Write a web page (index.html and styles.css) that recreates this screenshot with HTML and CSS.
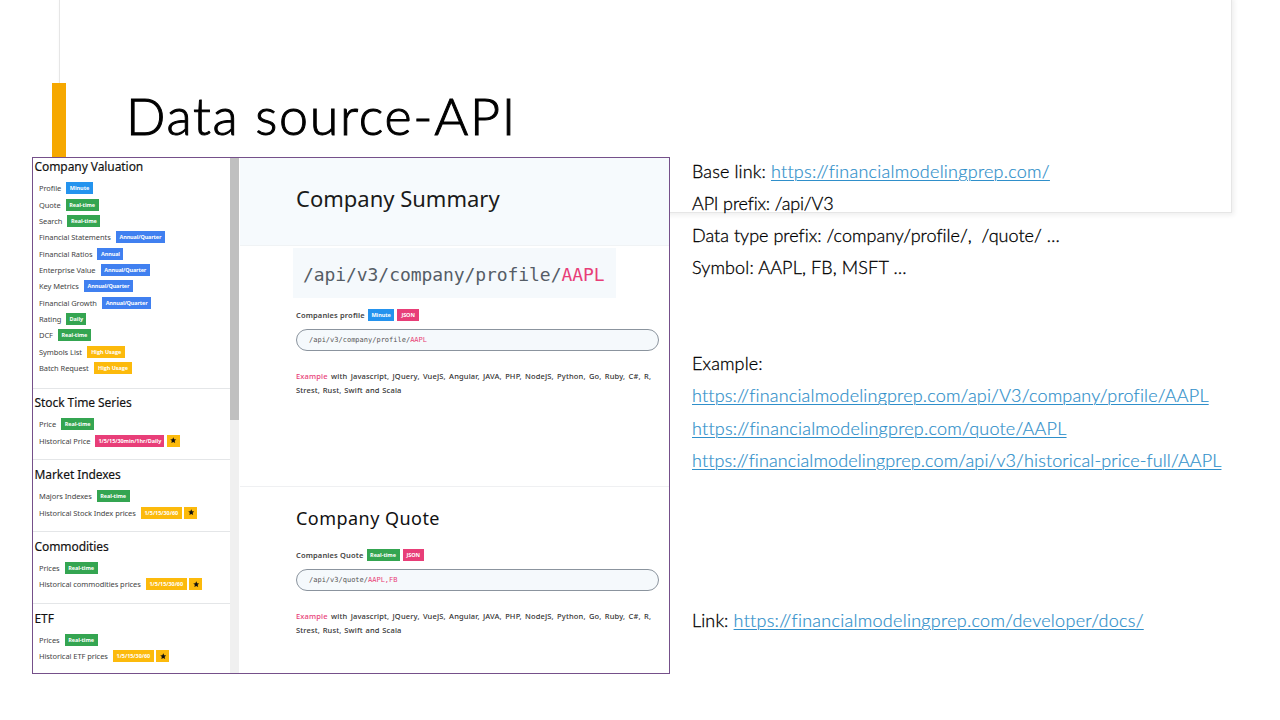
FILE: index.html
```html
<!DOCTYPE html>
<html lang="en">
<head>
<meta charset="utf-8">
<title>Data source-API</title>
<link rel="stylesheet" href="styles.css">
</head>
<body>
<div class="slide">
  <div class="frame"></div>
  <header class="head">
    <span class="accent"></span>
    <h1 class="title">Data source-API</h1>
  </header>
  <main class="content">
    <section class="shot">
      <nav class="side">
        <div class="group first">
          <h2>Company Valuation</h2>
          <div class="item">Profile <b class="tag sky">Minute</b></div>
          <div class="item">Quote <b class="tag green">Real-time</b></div>
          <div class="item">Search <b class="tag green">Real-time</b></div>
          <div class="item">Financial Statements <b class="tag blue">Annual/Quarter</b></div>
          <div class="item">Financial Ratios <b class="tag blue year">Annual</b></div>
          <div class="item">Enterprise Value <b class="tag blue">Annual/Quarter</b></div>
          <div class="item">Key Metrics <b class="tag blue">Annual/Quarter</b></div>
          <div class="item">Financial Growth <b class="tag blue">Annual/Quarter</b></div>
          <div class="item">Rating <b class="tag green day">Daily</b></div>
          <div class="item">DCF <b class="tag green">Real-time</b></div>
          <div class="item">Symbols List <b class="tag amber usage">High Usage</b></div>
          <div class="item">Batch Request <b class="tag amber usage">High Usage</b></div>
        </div>
        <div class="group">
          <h2>Stock Time Series</h2>
          <div class="item">Price <b class="tag green">Real-time</b></div>
          <div class="item">Historical Price <b class="tag pink long">1/5/15/30min/1hr/Daily</b><b class="tag amber star"><svg viewBox="0 0 24 24"><path d="M12 1l3.2 7.4 8 .7-6.100 5.200 1.900 7.900L12 18l-7 4.200 1.900-7.900L.8 9.100l8-.7z"/></svg></b></div>
        </div>
        <div class="group">
          <h2>Market Indexes</h2>
          <div class="item">Majors Indexes <b class="tag green">Real-time</b></div>
          <div class="item">Historical Stock Index prices <b class="tag amber mins">1/5/15/30/60</b><b class="tag amber star"><svg viewBox="0 0 24 24"><path d="M12 1l3.2 7.4 8 .7-6.100 5.200 1.900 7.900L12 18l-7 4.200 1.900-7.900L.8 9.100l8-.7z"/></svg></b></div>
        </div>
        <div class="group">
          <h2>Commodities</h2>
          <div class="item">Prices <b class="tag green">Real-time</b></div>
          <div class="item">Historical commodities prices <b class="tag amber mins">1/5/15/30/60</b><b class="tag amber star"><svg viewBox="0 0 24 24"><path d="M12 1l3.2 7.4 8 .7-6.100 5.200 1.900 7.900L12 18l-7 4.200 1.900-7.900L.8 9.100l8-.7z"/></svg></b></div>
        </div>
        <div class="group">
          <h2>ETF</h2>
          <div class="item">Prices <b class="tag green">Real-time</b></div>
          <div class="item">Historical ETF prices <b class="tag amber mins">1/5/15/30/60</b><b class="tag amber star"><svg viewBox="0 0 24 24"><path d="M12 1l3.2 7.4 8 .7-6.100 5.200 1.900 7.900L12 18l-7 4.200 1.900-7.900L.8 9.100l8-.7z"/></svg></b></div>
        </div>
      </nav>
      <div class="scroll"><div class="thumb"></div></div>
      <div class="docs">
        <h2 class="summary">Company Summary</h2>
        <div class="entry profile">
          <div class="big">/api/v3/company/profile/<i>AAPL</i></div>
          <div class="label">Companies profile <b class="tag sky">Minute</b><b class="tag pink json">JSON</b></div>
          <div class="pill">/api/v3/company/profile/<i>AAPL</i></div>
          <p class="langs"><i>Example</i> with Javascript, JQuery, VueJS, Angular, JAVA, PHP, NodeJS, Python, Go, Ruby, C#, R,<br><span class="rest">Strest, Rust, Swift and Scala</span></p>
        </div>
        <div class="entry">
          <h3>Company Quote</h3>
          <div class="label">Companies Quote <b class="tag green">Real-time</b><b class="tag pink json">JSON</b></div>
          <div class="pill">/api/v3/quote/<i>AAPL,FB</i></div>
          <p class="langs"><i>Example</i> with Javascript, JQuery, VueJS, Angular, JAVA, PHP, NodeJS, Python, Go, Ruby, C#, R,<br><span class="rest">Strest, Rust, Swift and Scala</span></p>
        </div>
      </div>
    </section>
    <section class="notes">
      <p>Base link: <a class="base">https://financialmodelingprep.com/</a></p>
      <p class="prefix">API prefix: /api/V3</p>
      <p class="types">Data type prefix: /company/profile/,&nbsp; /quote/ …</p>
      <p>Symbol: AAPL, FB, MSFT …</p>
      <p class="gap2">Example:</p>
      <p><a class="l1">https://financialmodelingprep.com/api/V3/company/profile/AAPL</a></p>
      <p><a class="l2">https://financialmodelingprep.com/quote/AAPL</a></p>
      <p><a class="l3">https://financialmodelingprep.com/api/v3/historical-price-full/AAPL</a></p>
      <p class="gap4">Link: <a class="l4">https://financialmodelingprep.com/developer/docs/</a></p>
    </section>
  </main>
</div>
</body>
</html>
```
FILE: styles.css
```css
* { box-sizing: border-box; }
body { margin: 0; background: #fff; }
h1, h2, h3, p { margin: 0; font-weight: 400; }
i { font-style: normal; color: #e83e78; }

.slide { position: relative; width: 1280px; height: 720px; overflow: hidden; background: #fff; }
.frame {
  position: absolute; left: 59px; top: -4px; width: 1173px; height: 217px;
  border: 1px solid #e6e6e6; box-shadow: 2px 2px 5px rgba(0, 0, 0, .07);
}
.head { position: relative; display: flex; height: 157px; padding: 83px 0 0 52px; }
.accent { width: 14px; height: 74px; background: #f6a800; }
.title {
  margin: -1px 0 0 60px; font: 300 52px/66px Lato, sans-serif; letter-spacing: 1.7px;
  color: #000; -webkit-text-stroke: 1px #000; white-space: nowrap;
}

.content { position: relative; display: flex; padding-left: 32px; }
.shot {
  display: grid; grid-template-columns: 197px 9px 1fr; flex: none;
  width: 638px; height: 517px; border: 1px solid #75508a; background: #fff; overflow: hidden;
  font-family: "Noto Sans", "Open Sans", sans-serif;
}
.side { overflow: hidden; white-space: nowrap; }
.group { height: 71.8px; padding: 5.500px 0 0 1.500px; border-top: 1px solid #e4e6e8; }
.group.first { height: 229.700px; padding-top: 0; border-top: 0; }
.group h2 { margin-bottom: 4px; font-size: 12px; line-height: 18px; letter-spacing: -.07px; color: #111; -webkit-text-stroke: .15px #111; }
.item {
  display: flex; align-items: center; height: 16.350px; padding-left: 4.500px;
  font-size: 7.500px; letter-spacing: -.07px; color: #444;
}
.tag {
  display: inline-flex; align-items: center; justify-content: center; flex: none;
  width: 33px; height: 12px; margin-left: 5px; color: #fff;
  font: 700 5.500px/12px "Open Sans", sans-serif; letter-spacing: -.06px;
}
.tag + .tag { margin-left: 2.500px; }
.sky { width: 26.500px; background: #2493ee; }
.green { background: #34a551; }
.blue { width: 49.500px; background: #4080f0; letter-spacing: -.15px; }
.year { width: 26px; }
.day { width: 20px; }
.amber { background: #fcba0c; }
.usage { width: 38.500px; }
.pink { background: #e83e78; }
.long { width: 69px; }
.mins { width: 41px; }
.star { width: 13px; }
.star svg { width: 6.500px; height: 6.500px; fill: #111; }
.json { width: 21.500px; }

.scroll { background: #f0f0f0; }
.thumb { height: 262px; background: #c0c0c0; }

.docs { margin-left: 1px; min-width: 0; white-space: nowrap; }
.summary {
  height: 88px; padding: 24px 0 0 56px; background: #f6fafd; border-bottom: 1px solid #f0f3f5;
  font-size: 22px; line-height: 32px; color: #1a1a1a;
}
.entry { padding: 16px 10px 0 56px; border-top: 1px solid #eff0f2; }
.profile { height: 240px; padding-top: 2px; border-top: 0; }
.big {
  width: 323px; height: 50px; margin: 0 0 9px -3px; padding: 2px 0 0 10px; background: #f5f9fc;
  font: 18px/50px "DejaVu Sans Mono", monospace; letter-spacing: -.07px; color: #555d66;
}
.label {
  display: flex; align-items: center; height: 16px;
  font-size: 7.500px; font-weight: 600; letter-spacing: .14px; color: #444;
}
.label .tag { margin-left: 3px; }
.pill {
  height: 22px; margin-top: 5.500px; padding-left: 12px; border: 1px solid #8b949e; border-radius: 11px;
  background: #f5f9fc; font: 7px/20px "DejaVu Sans Mono", monospace; color: #555;
}
.langs {
  margin-top: 18px; font: 500 7.500px/14.700px "Noto Sans", sans-serif;
  letter-spacing: .16px; word-spacing: 1.200px; color: #333;
}
.rest { word-spacing: .6px; }
.entry h3 { height: 32px; margin: -1px 0 13px; font-size: 18px; line-height: 32px; letter-spacing: .46px; color: #111; }

.notes {
  margin: -2px 0 0 22px; white-space: nowrap;
  font: 300 18px/32.070px Lato, sans-serif; letter-spacing: .13px; color: #000;
}
.notes p { height: 32.070px; font-weight: 300; -webkit-text-stroke: .3px currentColor; }
.notes a { color: #2f8fca; text-decoration: underline; text-decoration-thickness: 1px; text-underline-offset: 2px; -webkit-text-stroke: .2px currentColor; }
.notes .gap2 { margin-top: 64.140px; }
.notes .gap4 { margin-top: 128.280px; }
.notes .prefix { letter-spacing: -.165px; }
.notes .types { letter-spacing: .02px; }
.base { letter-spacing: .25px; }
.l1 { letter-spacing: .18px; }
.l2 { letter-spacing: .22px; }
.l3 { letter-spacing: .11px; }
.l4 { letter-spacing: .27px; }
```
